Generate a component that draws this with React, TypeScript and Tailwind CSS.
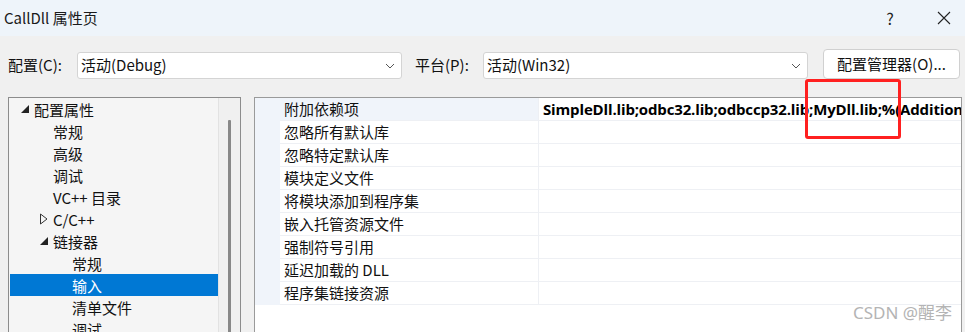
import React from "react";

const font = { fontFamily: '"Noto Sans CJK SC", "Noto Sans", sans-serif' };

function Chevron() {
  return (
    <svg width="10" height="6" viewBox="0 0 10 6" className="shrink-0">
      <path d="M1 1 L5 5 L9 1" fill="none" stroke="#555" strokeWidth="1" />
    </svg>
  );
}

function Combo({ text, w }: { text: string; w: string }) {
  return (
    <div className={`h-[27px] ${w} bg-white border border-[#d4d4d4] rounded-[3px] flex items-center pl-[3px] pr-[6px] justify-between`}>
      <span className="text-[15px] text-[#111]">{text}</span>
      <Chevron />
    </div>
  );
}

const Filled = () => (
  <svg width="10" height="10" viewBox="0 0 10 10"><path d="M9 1 L9 9 L1 9 Z" fill="#222" /></svg>
);
const Hollow = () => (
  <svg width="10" height="12" viewBox="0 0 10 12"><path d="M1.5 1 L8 6 L1.5 11 Z" fill="none" stroke="#333" strokeWidth="1" /></svg>
);

const tree: { t: string; indent: number; icon?: "f" | "h"; sel?: boolean }[] = [
  { t: "配置属性", indent: 0, icon: "f" },
  { t: "常规", indent: 1 },
  { t: "高级", indent: 1 },
  { t: "调试", indent: 1 },
  { t: "VC++ 目录", indent: 1 },
  { t: "C/C++", indent: 1, icon: "h" },
  { t: "链接器", indent: 1, icon: "f" },
  { t: "常规", indent: 2 },
  { t: "输入", indent: 2, sel: true },
  { t: "清单文件", indent: 2 },
  { t: "调试", indent: 2 },
];

const props = [
  "附加依赖项",
  "忽略所有默认库",
  "忽略特定默认库",
  "模块定义文件",
  "将模块添加到程序集",
  "嵌入托管资源文件",
  "强制符号引用",
  "延迟加载的 DLL",
  "程序集链接资源",
];

export default function App() {
  return (
    <div className="relative w-[965px] h-[332px] overflow-hidden bg-[#f0f0f0] flex flex-col" style={font}>
      {/* title bar */}
      <div className="h-[36px] bg-[#eef4fa] flex items-center shrink-0">
        <span className="pl-[4px] text-[15px] text-[#1a1a1a] flex-1">CallDll 属性页</span>
        <span className="text-[16px] text-[#222] w-[20px] text-center mr-[37px]">?</span>
        <svg width="14" height="14" viewBox="0 0 14 14" className="mr-[14px]">
          <path d="M1 1 L13 13 M13 1 L1 13" stroke="#222" strokeWidth="1.1" />
        </svg>
      </div>
      {/* config row */}
      <div className="flex items-center h-[27px] mt-[16px] shrink-0">
        <span className="pl-[8px] w-[77px] text-[15px] text-[#111]">配置(C):</span>
        <Combo text="活动(Debug)" w="w-[325px]" />
        <span className="ml-[13px] w-[68px] text-[15px] text-[#111]">平台(P):</span>
        <Combo text="活动(Win32)" w="w-[325px]" />
        <div className="ml-[15px] h-[30px] -mt-[3px] w-[137px] bg-white border border-[#d0d0d0] rounded-[4px] flex items-center justify-center text-[15px] text-[#111]">
          配置管理器(O)...
        </div>
      </div>
      {/* panels */}
      <div className="flex mt-[18px] flex-1 min-h-0">
        {/* tree */}
        <div className="ml-[8px] w-[233px] border-l border-t border-r border-[#8c8c8c] bg-[#f5f5f5] flex">
          <div className="flex-1 flex flex-col pl-[1px]">
            {tree.map((r, i) => (
              <div
                key={i}
                className={`h-[22px] flex items-center shrink-0 ${r.sel ? "bg-[#0078d4] text-white" : "text-[#111]"}`}
              >
                <div style={{ width: 10 + r.indent * 19 }} className="shrink-0" />
                <div className="w-[14px] shrink-0 flex items-center">
                  {r.icon === "f" ? <Filled /> : r.icon === "h" ? <Hollow /> : null}
                </div>
                <span className="text-[15px] leading-none">{r.t}</span>
              </div>
            ))}
          </div>
          <div className="w-[22px] border-l border-[#e2e2e2] bg-[#f0f0f0] flex justify-center pt-[22px]">
            <div className="w-[3px] h-full bg-[#888] rounded-t-[1px]" />
          </div>
        </div>
        {/* property grid */}
        <div className="ml-[13px] w-[708px] border-l border-t border-r border-[#9a9a9a] bg-white flex flex-col">
          <div className="flex flex-col">
            {props.map((p, i) => (
              <div key={i} className="h-[23px] flex shrink-0">
                <div className="w-[25px] bg-[#f0f4fa] shrink-0" />
                <div className={`w-[258px] shrink-0 flex items-center pl-[4px] border-b border-[#eef0f4] ${i === 0 ? "bg-[#f0f4fa]" : ""}`}>
                  <span className="text-[15px] text-[#111]">{p}</span>
                </div>
                <div className="flex-1 min-w-0 flex items-center pl-[4px] border-l border-b border-[#eef0f4] overflow-hidden whitespace-nowrap">
                  {i === 0 && (
                    <span className="text-[15px] font-bold text-[#000] tracking-[-0.15px]" style={{ fontFamily: '"Open Sans", "Noto Sans", sans-serif' }}>
                      SimpleDll.lib;odbc32.lib;odbccp32.lib;MyDll.lib;%(AdditionalDependencies)
                    </span>
                  )}
                </div>
              </div>
            ))}
          </div>
        </div>
      </div>
      {/* red annotation */}
      <div className="absolute left-[805px] top-[79px] w-[96px] h-[60px] border-[3px] border-[#ff2020] rounded-[3px]" />
      {/* watermark */}
      <div className="absolute left-[853px] top-[300px] text-[17px] text-[#b4b4b4]" style={{ fontFamily: '"Noto Sans", "Noto Sans CJK SC", sans-serif' }}>
        CSDN @醒李
      </div>
    </div>
  );
}
